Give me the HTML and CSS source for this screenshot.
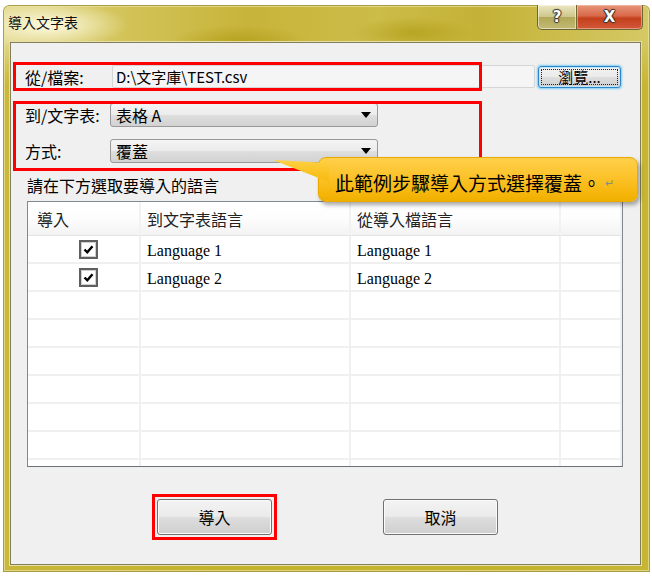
FILE: index.html
```html
<!DOCTYPE html>
<html lang="zh-Hant">
<head>
    <meta charset="UTF-8">
    <title>導入文字表</title>
    <link rel="stylesheet" href="styles.css">
</head>
<body>
    <div class="window">
        <div class="titlebar">
            <span class="title">導入文字表</span>
            <div class="caption-btns">
                <span class="cap-btn help">?</span>
                <span class="cap-btn close">X</span>
            </div>
        </div>

        <div class="client">
            <div class="row row-file">
                <span class="label">從/檔案:</span>
                <span class="field">D:\文字庫\TEST.csv</span>
                <span class="btn btn-browse"><span class="focus">瀏覽...</span></span>
            </div>
            <div class="row row-combo">
                <span class="label">到/文字表:</span>
                <span class="combo">表格 A<span class="arrow"></span></span>
            </div>
            <div class="row row-combo row-mode">
                <span class="label">方式:</span>
                <span class="combo">覆蓋<span class="arrow"></span></span>
            </div>

            <div class="hint">請在下方選取要導入的語言</div>

            <div class="list">
                <div class="list-row list-head">
                    <div>導入</div>
                    <div>到文字表語言</div>
                    <div>從導入檔語言</div>
                    <div></div>
                </div>
                <div class="list-row">
                    <div class="check-cell"><span class="checkbox"><svg viewBox="0 0 15 15"><path d="M3.5 7.5 L6.3 10.3 L11.5 4.2"/></svg></span></div>
                    <div class="lang">Language 1</div>
                    <div class="lang">Language 1</div>
                    <div></div>
                </div>
                <div class="list-row">
                    <div class="check-cell"><span class="checkbox"><svg viewBox="0 0 15 15"><path d="M3.5 7.5 L6.3 10.3 L11.5 4.2"/></svg></span></div>
                    <div class="lang">Language 2</div>
                    <div class="lang">Language 2</div>
                    <div></div>
                </div>
                <div class="list-row"><div></div><div></div><div></div><div></div></div>
                <div class="list-row"><div></div><div></div><div></div><div></div></div>
                <div class="list-row"><div></div><div></div><div></div><div></div></div>
                <div class="list-row"><div></div><div></div><div></div><div></div></div>
                <div class="list-row"><div></div><div></div><div></div><div></div></div>
                <div class="list-row"><div></div><div></div><div></div><div></div></div>
                <div class="list-row"><div></div><div></div><div></div><div></div></div>
            </div>

            <div class="actions">
                <span class="marked"><span class="btn btn-action">導入</span></span>
                <span class="btn btn-action">取消</span>
            </div>

            <!-- annotation overlays -->
            <div class="mark mark-file"></div>
            <div class="mark mark-options"></div>
            <div class="callout">此範例步驟導入方式選擇覆蓋。<span class="para">↵</span></div>
            <svg class="callout-tail" viewBox="0 0 68 30">
                <defs>
                    <linearGradient id="tailFill" x1="0" y1="0" x2="0" y2="1">
                        <stop offset="0" stop-color="#ffd042"/>
                        <stop offset="1" stop-color="#f7b90c"/>
                    </linearGradient>
                </defs>
                <polygon points="12,3 68,6 68,25" fill="url(#tailFill)"/>
            </svg>
        </div>
    </div>
</body>
</html>
```

FILE: styles.css
```css
body {
    margin: 0;
    background: #fff;
    font-family: "Noto Sans CJK TC", "Noto Sans", sans-serif;
    font-size: 16px;
    color: #000;
}

.window {
    margin: 5px 0 0 3px;
    width: 647px;
    height: 567px;
    display: flex;
    flex-direction: column;
    border-radius: 6px 6px 0 0;
    background:
        radial-gradient(ellipse 80px 24px at 45px 20px, rgba(255,253,232,0.95), rgba(255,253,232,0)),
        radial-gradient(ellipse 70px 18px at 235px 38px, rgba(165,145,5,0.55), rgba(165,145,5,0)),
        radial-gradient(ellipse 60px 16px at 410px 28px, rgba(165,145,5,0.5), rgba(165,145,5,0)),
        linear-gradient(180deg, rgba(196,178,42,0) 36px, rgba(196,178,42,0.85) 80px),
        linear-gradient(90deg, #e2d88e 0%, #d3c45a 18%, #c7b43a 38%, #ccbc48 58%, #c4b236 74%, #d5c966 100%);
    box-shadow: inset 0 0 0 1px rgba(130,115,25,0.6), inset 0 0 0 2px rgba(235,228,160,0.7);
}

.titlebar {
    flex: none;
    height: 37px;
    display: flex;
    justify-content: space-between;
    padding: 0 7px 0 5px;
}

.title {
    font-size: 14px;
    line-height: 1;
    margin-top: 10px;
    color: #111;
}

.caption-btns {
    display: flex;
    height: 25px;
}

.cap-btn {
    display: flex;
    align-items: center;
    justify-content: center;
    font-family: "DejaVu Sans", sans-serif;
    font-weight: bold;
    font-size: 15px;
    color: #fff;
    text-shadow: 0 0 1px #222, 1px 0 1px #333, -1px 0 1px #333, 0 1px 1px #333, 0 -1px 1px #333;
    border: 1px solid #6e6530;
    border-top: none;
    box-sizing: border-box;
}

.cap-btn.help {
    width: 40px;
    border-radius: 0 0 0 5px;
    background: linear-gradient(#ece8c2, #cdc58a 50%, #b2a858 51%, #c2ba74);
    box-shadow: inset 0 0 0 1px rgba(255,255,255,0.5);
}

.cap-btn.close {
    width: 66px;
    border-left: none;
    border-radius: 0 0 5px 0;
    background: linear-gradient(#e8967a, #d8694a 45%, #c4401c 55%, #d2583a);
    box-shadow: inset 0 0 0 1px rgba(255,210,190,0.5);
}

.client {
    position: relative;
    margin: 0 9px 0 7px;
    height: 523px;
    box-sizing: border-box;
    border: 1px solid #837f5c;
    background: #f0f0f0;
    padding: 22px 0 0 14px;
    box-shadow: 0 0 0 1px #e6e0a8;
}

.row {
    display: flex;
    align-items: center;
}

.label {
    width: 85px;
    flex: none;
    line-height: 20px;
}

.row-file {
    height: 23px;
}

.row-file .label {
    width: 87px;
}

.field {
    width: 423px;
    height: 23px;
    box-sizing: border-box;
    border: 1px solid #d6d6d6;
    border-radius: 2px;
    background: #f5f5f5;
    padding-left: 3px;
    font-size: 15px;
    line-height: 21px;
}

.btn {
    display: flex;
    align-items: center;
    justify-content: center;
    box-sizing: border-box;
    background: linear-gradient(#f3f3f3, #ebebeb 48%, #dddddd 52%, #cfcfcf);
}

.btn-browse {
    margin-left: 3px;
    width: 83px;
    height: 22px;
    border: 1px solid #2c86c8;
    border-radius: 3px;
    box-shadow: 0 0 2px 1px #7fcdf4, inset 0 0 0 1px #bfe6fb;
    padding: 2px;
}

.btn-browse .focus {
    flex: 1;
    align-self: stretch;
    display: flex;
    align-items: center;
    justify-content: center;
    border: 1px dotted #222;
    font-size: 15px;
    line-height: 1;
}

.row-combo {
    margin-top: 15px;
    height: 24px;
}

.row-mode {
    margin-top: 12px;
}

.combo {
    width: 268px;
    height: 24px;
    box-sizing: border-box;
    display: flex;
    align-items: center;
    justify-content: space-between;
    padding: 0 6px 0 5px;
    border: 1px solid #999;
    border-radius: 3px;
    background: linear-gradient(#f4f4f4, #ececec 48%, #dedede 52%, #d2d2d2);
    line-height: 20px;
}

.arrow {
    width: 0;
    height: 0;
    border-left: 5px solid transparent;
    border-right: 5px solid transparent;
    border-top: 6px solid #000;
}

.hint {
    margin-top: 12px;
    padding-left: 2px;
    line-height: 20px;
}

.list {
    margin: 6px 0 0 2px;
    width: 596px;
    height: 266px;
    box-sizing: border-box;
    border: 1px solid #828790;
    border-bottom-color: #6b6f78;
    background: #fff;
    overflow: hidden;
}

.list-row {
    display: grid;
    grid-template-columns: 113px 210px 210px 1fr;
    height: 28px;
}

.list-row > div {
    box-sizing: border-box;
    border-right: 2px solid #f0f0f0;
    border-bottom: 2px solid #f0f0f0;
    display: flex;
    align-items: center;
}

.list-head {
    height: 34px;
}

.list-head > div {
    border-right: 2px solid #f2f2f2;
    border-bottom: 1px solid #e3e3e3;
    background: linear-gradient(#fff, #fdfdfd 50%, #f3f3f3);
    padding-left: 6px;
    color: #222;
}

.list-head > div:first-child {
    padding-left: 9px;
}

.check-cell {
    justify-content: center;
    padding-left: 9px;
}

.checkbox {
    width: 19px;
    height: 19px;
    box-sizing: border-box;
    border: 2px solid #5f5f5f;
    background: #fff;
    box-shadow: inset 0 0 0 1px #cfcfcf;
    display: flex;
}

.checkbox svg {
    width: 15px;
    height: 15px;
}

.checkbox path {
    fill: none;
    stroke: #000;
    stroke-width: 2.4;
}

.lang {
    padding-left: 6px;
    padding-top: 3px;
    font-family: "Liberation Serif", serif;
    font-size: 16px;
}

.actions {
    display: flex;
    align-items: center;
    gap: 106px;
    margin-top: 27px;
    padding-left: 127px;
}

.marked {
    border: 3px solid #ff0000;
    padding: 2px;
}

.btn-action {
    width: 115px;
    height: 36px;
    border: 1px solid #707070;
    border-radius: 3px;
    box-shadow: inset 0 0 0 1px #fbfbfb;
    line-height: 1;
}

.mark {
    position: absolute;
    box-sizing: border-box;
    border: 3px solid #ff0000;
}

.mark-file {
    left: 2px;
    top: 19px;
    width: 469px;
    height: 29px;
}

.mark-options {
    left: 2px;
    top: 58px;
    width: 469px;
    height: 70px;
}

.callout {
    position: absolute;
    left: 307px;
    top: 114px;
    width: 320px;
    height: 45px;
    box-sizing: border-box;
    display: flex;
    align-items: center;
    padding: 5px 0 0 16px;
    border: 1px solid #e8aa00;
    border-radius: 8px;
    background: linear-gradient(#ffd04a, #fcc22a 45%, #f6b60c 80%, #f0b000);
    box-shadow: 2px 3px 4px rgba(0,0,0,0.35);
    font-size: 19px;
    line-height: 1;
    color: #000;
}

.callout .para {
    font-size: 11px;
    color: #8a8a8a;
    margin-left: 4px;
}

.callout-tail {
    position: absolute;
    left: 250px;
    top: 114px;
    width: 68px;
    height: 30px;
}
```
